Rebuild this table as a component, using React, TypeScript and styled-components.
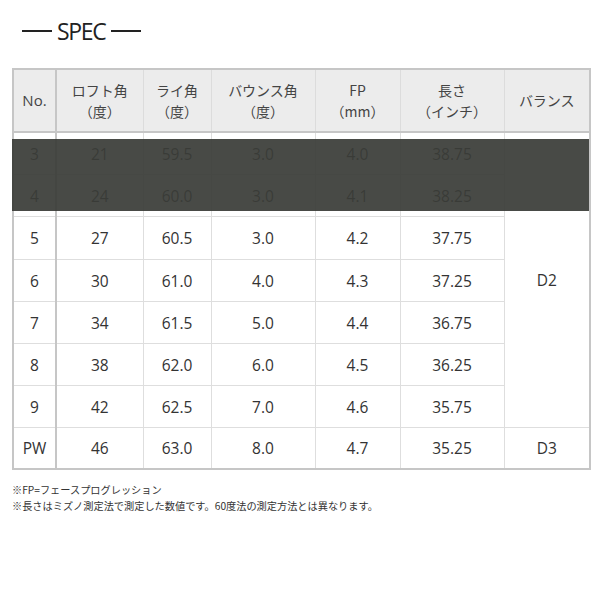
import React from "react";
import styled, { createGlobalStyle } from "styled-components";

const Global = createGlobalStyle`
  html, body { margin: 0; padding: 0; background: #fff; }
  body { font-family: "Open Sans", "Noto Sans CJK JP", sans-serif; color: #333; }
`;

const Page = styled.div`
  width: 600px;
  height: 600px;
  box-sizing: border-box;
  padding: 16px 11px 0 12px;
  display: flex;
  flex-direction: column;
`;

const Title = styled.h2`
  margin: 0 0 0 10px;
  display: flex;
  align-items: center;
  gap: 5px;
  font-family: "Open Sans", sans-serif;
  font-weight: 400;
  font-size: 23px;
  letter-spacing: -1.3px;
  line-height: 30px;
  color: #222;
`;

const Rule = styled.span`
  display: block;
  width: 30px;
  height: 2px;
  background: #222;
`;

const TableWrap = styled.div`
  position: relative;
  margin-top: 22px;
  width: 577px;
`;

const Table = styled.table`
  width: 577px;
  border-collapse: collapse;
  table-layout: fixed;
  border: 2px solid #c6c6c6;
  font-family: "Open Sans", "Noto Sans CJK JP", sans-serif;
`;

const Th = styled.th<{ $first?: boolean }>`
  height: 61px;
  padding: 0;
  background: #ececec;
  font-weight: 400;
  font-size: 14px;
  line-height: 21px;
  color: #444;
  text-align: center;
  vertical-align: middle;
  border-left: 1px solid #dcdcdc;
  border-bottom: 2px solid #c6c6c6;
  font-family: "Noto Sans CJK JP", "Open Sans", sans-serif;
  ${(p) => (p.$first ? "border-right: 2px solid #c6c6c6; font-family: 'Open Sans', sans-serif; font-size: 15px;" : "")}
`;

const Td = styled.td<{ $first?: boolean; $h: number }>`
  height: ${(p) => p.$h}px;
  padding: 0;
  font-size: 15.5px;
  color: #333;
  text-align: center;
  vertical-align: middle;
  border-left: 1px solid #dedede;
  border-top: 1px solid #dedede;
  ${(p) => (p.$first ? "border-right: 2px solid #c6c6c6;" : "")}
`;

const Shade = styled.div`
  position: absolute;
  left: 0;
  right: 0;
  top: 71px;
  height: 72px;
  background: rgba(58, 60, 56, 0.93);
  pointer-events: none;
`;

const Notes = styled.div`
  margin-top: 12px;
  font-family: "Noto Sans CJK JP", sans-serif;
  font-size: 10.2px;
  line-height: 16px;
  color: #333;
`;

const widths = [43, 87, 68, 104, 85, 104, 86];

const headers: React.ReactNode[] = [
  "No.",
  <>ロフト角<br />（度）</>,
  <>ライ角<br />（度）</>,
  <>バウンス角<br />（度）</>,
  <>FP<br />（mm）</>,
  <>長さ<br />（インチ）</>,
  "バランス",
];

const rows: { cells: string[]; h: number; bal?: { text: string; span: number } }[] = [
  { cells: ["3", "21", "59.5", "3.0", "4.0", "38.75"], h: 41, bal: { text: "D2", span: 7 } },
  { cells: ["4", "24", "60.0", "3.0", "4.1", "38.25"], h: 41 },
  { cells: ["5", "27", "60.5", "3.0", "4.2", "37.75"], h: 42 },
  { cells: ["6", "30", "61.0", "4.0", "4.3", "37.25"], h: 41 },
  { cells: ["7", "34", "61.5", "5.0", "4.4", "36.75"], h: 41 },
  { cells: ["8", "38", "62.0", "6.0", "4.5", "36.25"], h: 41 },
  { cells: ["9", "42", "62.5", "7.0", "4.6", "35.75"], h: 41 },
  { cells: ["PW", "46", "63.0", "8.0", "4.7", "35.25"], h: 40, bal: { text: "D3", span: 1 } },
];

export default function App() {
  return (
    <>
      <Global />
      <Page>
        <Title>
          <Rule />
          SPEC
          <Rule />
        </Title>
        <TableWrap>
          <Table>
            <colgroup>
              {widths.map((w, i) => (
                <col key={i} style={{ width: w }} />
              ))}
            </colgroup>
            <thead>
              <tr>
                {headers.map((h, i) => (
                  <Th key={i} $first={i === 0}>
                    {h}
                  </Th>
                ))}
              </tr>
            </thead>
            <tbody>
              {rows.map((r, ri) => (
                <tr key={ri}>
                  {r.cells.map((c, ci) => (
                    <Td key={ci} $h={r.h} $first={ci === 0}>
                      {c}
                    </Td>
                  ))}
                  {r.bal && (
                    <Td $h={r.h} rowSpan={r.bal.span}>
                      {r.bal.text}
                    </Td>
                  )}
                </tr>
              ))}
            </tbody>
          </Table>
          <Shade />
        </TableWrap>
        <Notes>
          ※FP=フェースプログレッション
          <br />
          ※長さはミズノ測定法で測定した数値です。60度法の測定方法とは異なります。
        </Notes>
      </Page>
    </>
  );
}
